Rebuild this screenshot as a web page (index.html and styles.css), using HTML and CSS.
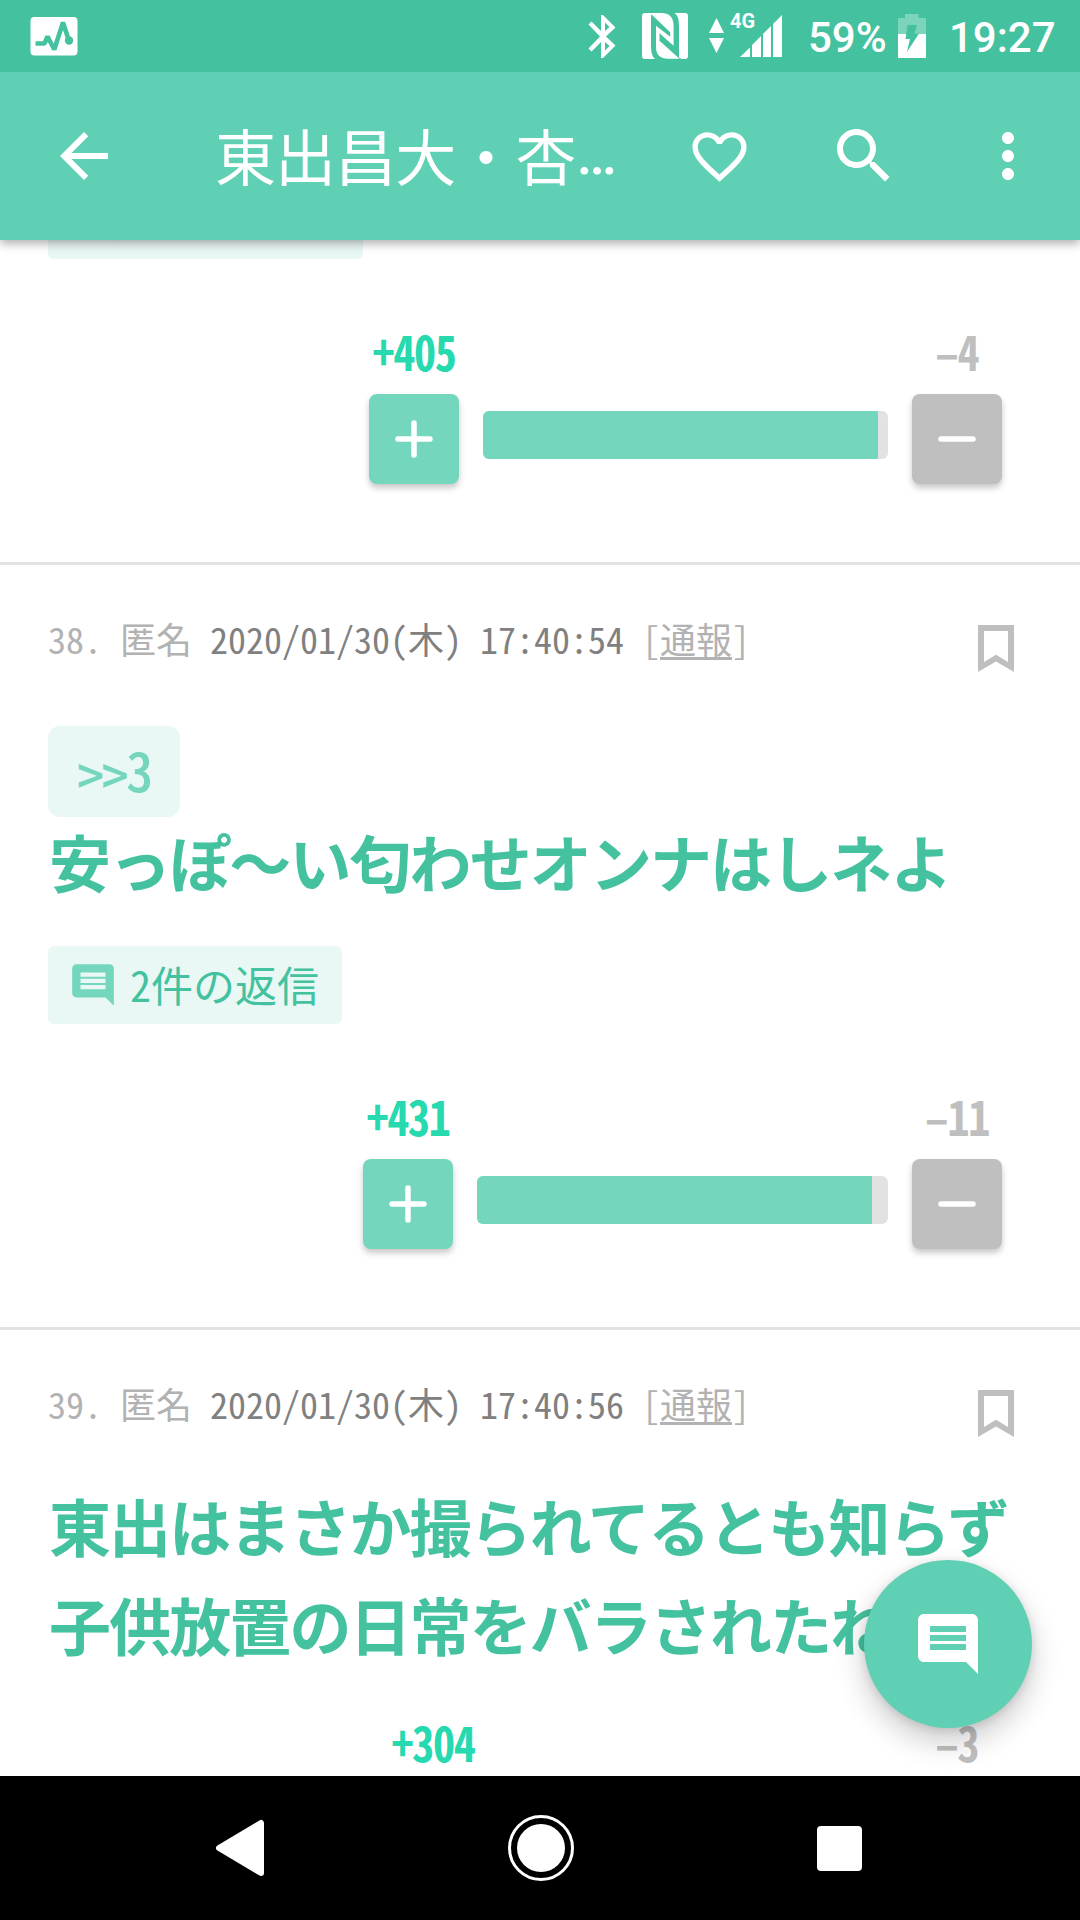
FILE: index.html
```html
<!DOCTYPE html>
<html lang="ja">
<head>
<meta charset="utf-8">
<title>東出昌大・杏</title>
<link rel="stylesheet" href="styles.css">
</head>
<body>
<svg width="0" height="0" class="defs" aria-hidden="true">
  <symbol id="comment" viewBox="0 0 24 24"><path d="M21.99 4c0-1.1-.89-2-1.99-2H4c-1.1 0-2 .9-2 2v12c0 1.1.9 2 2 2h14l4 4-.01-18zM18 14H6v-2h12v2zm0-3H6V9h12v2zm0-3H6V6h12v2z"/></symbol>
  <symbol id="bookmark" viewBox="0 0 36 47"><path fill-rule="evenodd" d="M0 0H36V47L18 36.5 0 47ZM6 6V37L18 29.7 30 37V6Z"/></symbol>
  <symbol id="plus" viewBox="0 0 38 38"><path d="M19 3V35M3 19H35" stroke="#fff" stroke-width="5.5" stroke-linecap="round"/></symbol>
  <symbol id="minus" viewBox="0 0 38 38"><path d="M3 19H35" stroke="#fff" stroke-width="5.5" stroke-linecap="round"/></symbol>
</svg>
<div class="screen">
  <div class="status">
    <svg class="st-app" width="48" height="40" viewBox="30 16 48 40"><rect x="30.5" y="17" width="47" height="38.5" rx="4" fill="#fff"/><path d="M35.5 43.5H44.5L47.5 36.5 54.3 49.500 63 22.500 69 41" fill="none" stroke="#44c2a0" stroke-width="4.6" stroke-linejoin="bevel"/><circle cx="69" cy="40.5" r="4.2" fill="#44c2a0"/></svg>
    <svg class="st-radio" width="142" height="48" viewBox="588 12 142 48" fill="#fff">
      <path fill-rule="evenodd" d="M601 15H603L615.500 27.500 606 36.500 615.500 45.500 603 58H601V42L591.500 51.500 588.500 48.500 600 36.500 588.500 24.500 591.500 21.500 601 31ZM605 22.500V31L609.500 27ZM605 42V50.500L609.500 46Z"/>
      <path d="M645 13H652Q651 14.500 651 18V46Q651 56 655 59H645Q642 59 642 56V16Q642 13 645 13Z"/>
      <path d="M651.500 14.500 670.200 32.300V36.700L656 25.700V46.700Q656 58.700 668 58.700H679.500L659.500 40.700V33.300L673.600 45.700V26Q673.600 13 661 13H651.500Z"/>
      <path d="M674.500 13H685Q688 13 688 16V56Q688 59 685 59H682L679 57.500V26Q679 15.500 674.500 13Z"/>
      <path d="M709 33 716.500 18 724 33ZM709 38H724L716.500 53Z"/>
    </svg>
    <div class="network">
      <span class="net">4G</span>
      <svg width="42" height="42" viewBox="740 15 42 42" fill="#fff"><path d="M740 57 750 47.500V57ZM752 45 761 36V57H752ZM763 34 771 26V57H763ZM773 24 782 15V57H773Z"/></svg>
    </div>
    <span class="percent">59%</span>
    <svg class="st-batt" width="28" height="44" viewBox="0 0 28 44"><path fill="#fff" fill-opacity=".3" d="M7 0H20.500V4H28V20H0V4H7Z"/><path fill="#fff" d="M0 20H28V44H0Z"/><path fill="#44c2a0" d="M9.500 11H19L16.500 19.500H21L9 38 12 25H7.500Z"/></svg>
    <span class="clock">19:27</span>
  </div>
  <div class="toolbar">
    <svg class="ic back" width="72" height="72" viewBox="0 0 24 24"><path d="M20 11H7.830l5.590-5.590L12 4l-8 8 8 8 1.410-1.410L7.830 13H20v-2z"/></svg>
    <h1 class="title">東出昌大・杏<span class="dots">…</span></h1>
    <svg class="ic heart" width="65" height="65" viewBox="0 0 24 24"><path d="M16.500 3c-1.740 0-3.410.81-4.500 2.090C10.910 3.810 9.240 3 7.500 3 4.420 3 2 5.420 2 8.500c0 3.780 3.400 6.860 8.550 11.540L12 21.350l1.450-1.320C18.600 15.360 22 12.280 22 8.500 22 5.420 19.580 3 16.500 3zm-4.400 15.550l-.1.100-.1-.1C7.140 14.240 4 11.390 4 8.500 4 6.500 5.500 5 7.500 5c1.540 0 3.040.990 3.570 2.360h1.870C13.460 5.990 14.960 5 16.500 5c2 0 3.500 1.500 3.500 3.500 0 2.890-3.140 5.740-7.900 10.050z"/></svg>
    <svg class="ic search" width="72" height="72" viewBox="0 0 24 24"><path d="M15.500 14h-.79l-.28-.27C15.410 12.590 16 11.110 16 9.500 16 5.910 13.090 3 9.500 3S3 5.910 3 9.500 5.910 16 9.500 16c1.610 0 3.090-.59 4.230-1.570l.27.28v.79l5 4.990L20.490 19l-4.990-5zm-6 0C7.010 14 5 11.990 5 9.500S7.010 5 9.500 5 14 7.010 14 9.500 11.990 14 9.500 14z"/></svg>
    <svg class="ic more" width="72" height="72" viewBox="0 0 24 24"><path d="M12 8c1.100 0 2-.9 2-2s-.9-2-2-2-2 .9-2 2 .9 2 2 2zm0 2c-1.100 0-2 .9-2 2s.9 2 2 2 2-.9 2-2-.9-2-2-2zm0 6c-1.100 0-2 .9-2 2s.9 2 2 2 2-.9 2-2-.9-2-2-2z"/></svg>
  </div>
  <main class="feed">
    <article class="post scrolled">
      <div class="chip wide"><svg width="50" height="50"><use href="#comment"/></svg></div>
      <div class="votes">
        <div class="vote up"><span class="count">+405</span><span class="btn"><svg width="38" height="38"><use href="#plus"/></svg></span></div>
        <div class="bar w405"><div class="fill" style="width:97.5%"></div></div>
        <div class="vote down"><span class="count">–4</span><span class="btn"><svg width="38" height="38"><use href="#minus"/></svg></span></div>
      </div>
    </article>
    <article class="post">
      <header class="meta"><p class="info">38. 匿名 <span class="date">2020/01/30(木) 17:40:54</span> [<u>通報</u>]</p><svg class="mark" width="36" height="47"><use href="#bookmark"/></svg></header>
      <div class="anchor"><span>&gt;&gt;</span>3</div>
      <p class="body">安っぽ～い匂わせオンナはしネよ</p>
      <div class="chip"><svg width="50" height="50"><use href="#comment"/></svg><span>2件の返信</span></div>
      <div class="votes">
        <div class="vote up"><span class="count">+431</span><span class="btn"><svg width="38" height="38"><use href="#plus"/></svg></span></div>
        <div class="bar w411"><div class="fill" style="width:96.1%"></div></div>
        <div class="vote down"><span class="count">–11</span><span class="btn"><svg width="38" height="38"><use href="#minus"/></svg></span></div>
      </div>
    </article>
    <article class="post last">
      <header class="meta"><p class="info">39. 匿名 <span class="date">2020/01/30(木) 17:40:56</span> [<u>通報</u>]</p><svg class="mark" width="36" height="47"><use href="#bookmark"/></svg></header>
      <p class="body">東出はまさか撮られてるとも知らず<br>子供放置の日常をバラされたね</p>
      <div class="votes">
        <div class="vote up"><span class="count">+304</span></div>
        <div class="bar w386"></div>
        <div class="vote down"><span class="count">–3</span></div>
      </div>
    </article>
    <div class="fab"><svg width="72" height="72"><use href="#comment"/></svg></div>
  </main>
  <nav class="nav">
    <svg width="48" height="58" viewBox="1 0 48 58"><path d="M46 4V54L4 29Z" fill="#fff" stroke="#fff" stroke-width="6" stroke-linejoin="round"/></svg>
    <svg width="66" height="66" viewBox="0 0 66 66"><circle cx="33" cy="33" r="31.5" fill="none" stroke="#fff" stroke-width="3"/><circle cx="33" cy="33" r="24" fill="#fff"/></svg>
    <svg width="45" height="45" viewBox="0 0 45 45"><rect width="45" height="45" rx="4" fill="#fff"/></svg>
  </nav>
</div>
</body>
</html>
```
FILE: styles.css
```css
* { box-sizing: border-box; margin: 0; padding: 0; }
body {
  width: 1080px;
  height: 1920px;
  overflow: hidden;
  background: #fff;
  font-family: "Noto Sans CJK JP", sans-serif;
}
svg { display: block; flex: none; }
.defs { position: absolute; }
.screen { display: flex; flex-direction: column; height: 1920px; }

.status {
  display: flex;
  flex: none;
  align-items: center;
  height: 72px;
  padding-left: 30px;
  background: #44c2a0;
  color: #fff;
  font: 500 42px/72px Roboto, sans-serif;
  z-index: 2;
}
.st-radio { margin-left: 510px; }
.network { display: flex; align-items: flex-start; height: 42px; width: 52px; }
.net { width: 24px; margin-right: -14px; font: 700 20px/24px Roboto, sans-serif; margin-top: -6px; }
.percent { width: 90px; margin-left: 26px; padding-top: 3px; }
.clock { margin-left: 23px; padding-top: 3px; }

.toolbar {
  display: flex;
  align-items: center;
  height: 168px;
  flex: none;
  padding-left: 48px;
  background: #5fd0b4;
  z-index: 1;
  box-shadow: 0 3px 10px rgba(0, 0, 0, .35);
}
.ic { fill: #fff; }
.title {
  display: flex;
  width: 472px;
  margin-left: 95px;
  margin-right: 1px;
  padding-bottom: 2px;
  color: #fff;
  font-size: 61px;
  font-weight: 400;
  line-height: 100px;
  letter-spacing: -.9px;
  white-space: nowrap;
}
.dots { font-family: Roboto, sans-serif; font-size: 57px; font-weight: 500; margin-left: 1px; }
.heart { margin-left: -1px; }
.search { margin-left: 76px; }
.more { margin-left: 72px; }

.feed { position: relative; flex: 1; min-height: 0; overflow: hidden; font-feature-settings: "hwid"; }
.post { height: 765px; border-bottom: 3px solid #e2e2e2; padding-left: 48px; }
.scrolled { height: 384px; }
.scrolled .chip { margin-top: -59px; }
.last { border: 0; }

.meta { display: flex; justify-content: space-between; padding: 48px 66px 0 0; }
.info { font-size: 36px; line-height: 50px; height: 48px; color: #b2b2b2; white-space: pre; }
.info u { text-decoration-thickness: 3px; text-underline-offset: 3px; text-decoration-skip-ink: none; }
.date { color: #808080; }
.mark { fill: #bfbfbf; margin-top: 12px; }

.anchor {
  display: flex;
  justify-content: center;
  width: 132px;
  height: 91px;
  margin-top: 54px;
  border-radius: 12px;
  background: #e9f8f5;
  color: #73d6bd;
  font-size: 54px;
  font-weight: 500;
  line-height: 86px;
  letter-spacing: -2.5px;
}
.anchor span { padding-top: 4px; }
.body {
  margin-top: -5px;
  padding-left: 1px;
  color: #44c2a0;
  font-size: 62px;
  font-weight: 700;
  font-feature-settings: normal;
  line-height: 99px;
  letter-spacing: -1.9px;
  white-space: nowrap;
}
.last .body { margin-top: 39px; margin-bottom: -1px; }

.chip {
  display: flex;
  align-items: center;
  width: 294px;
  height: 78px;
  margin-top: 35px;
  padding-left: 20px;
  border-radius: 6px;
  background: #e9f8f5;
  color: #44c2a0;
  font-size: 42px;
  line-height: 72px;
}
.chip span { padding-bottom: 3px; }
.wide { width: 315px; }
.chip svg { fill: #73d6bd; margin-right: 12px; }

.votes { display: flex; justify-content: flex-end; gap: 24px; margin-top: 61px; padding-right: 78px; }
.last .votes { margin-top: 38px; }
.vote { display: flex; flex-direction: column; align-items: center; gap: 14px; width: 90px; }
.count {
  height: 60px;
  font-size: 48px;
  font-weight: 700;
  line-height: 60px;
  letter-spacing: -1.5px;
  white-space: nowrap;
  transform: scaleX(.92);
}
.up .count { color: #26d9ae; }
.down .count { color: #bfbfbf; }
.btn {
  display: grid;
  place-items: center;
  width: 90px;
  height: 90px;
  border-radius: 8px;
  background: #bfbfbf;
  box-shadow: 0 4px 6px rgba(0, 0, 0, .22);
}
.up .btn { background: #73d6bd; }
.bar { height: 48px; margin-top: 91px; border-radius: 6px; background: #e2e2e2; overflow: hidden; }
.last .bar { visibility: hidden; }
.w405 { width: 405px; }
.w411 { width: 411px; }
.w386 { width: 386px; }
.fill { height: 100%; background: #73d6bd; }

.fab {
  position: absolute;
  right: 48px;
  bottom: 48px;
  display: grid;
  place-items: center;
  width: 168px;
  height: 168px;
  border-radius: 50%;
  background: #5fd0b4;
  fill: #fff;
  box-shadow: 0 14px 30px rgba(0, 0, 0, .2), 0 2px 10px rgba(0, 0, 0, .12);
}

.nav {
  display: flex;
  flex: none;
  align-items: center;
  justify-content: space-between;
  height: 144px;
  padding: 0 218px 0 216px;
  background: #000;
}
```
